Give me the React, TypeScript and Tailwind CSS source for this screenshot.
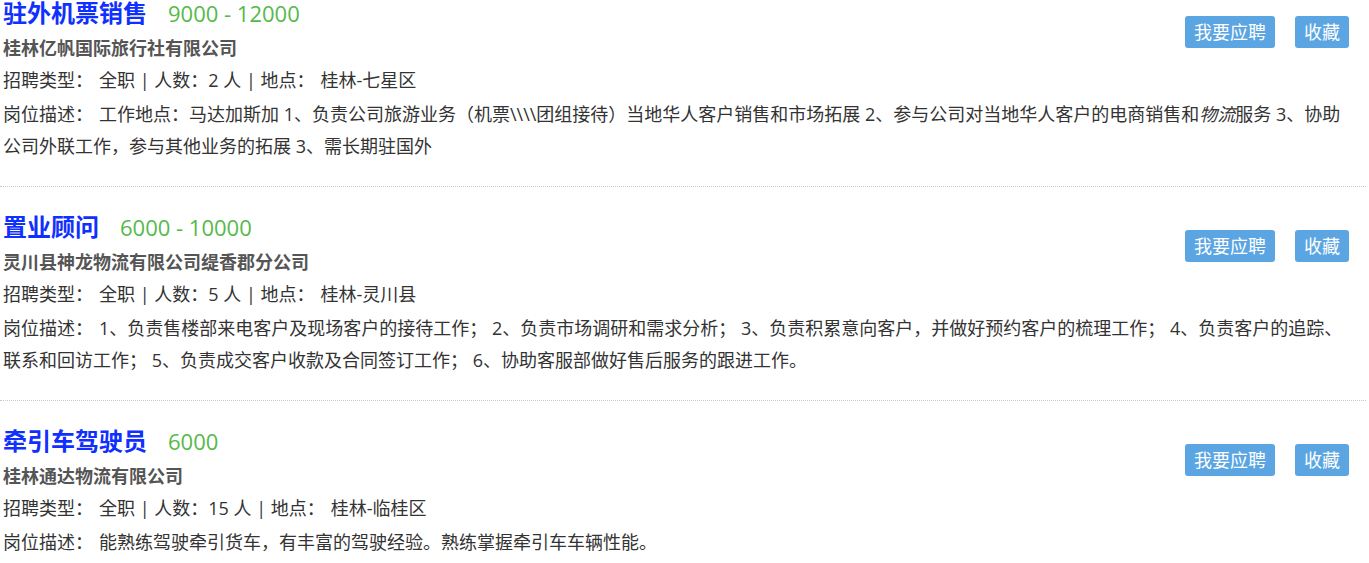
import React from 'react';

type Job = {
  id: number;
  title: string;
  salary: string;
  company: string;
  count: number;
  location: string;
  desc: React.ReactNode;
};

const jobs: Job[] = [
  {
    id: 1,
    title: '驻外机票销售',
    salary: '9000 - 12000',
    company: '桂林亿帆国际旅行社有限公司',
    count: 2,
    location: '桂林-七星区',
    desc: (
      <>
        工作地点：马达加斯加 1、负责公司旅游业务（机票\\\\团组接待）当地华人客户销售和市场拓展 2、参与公司对当地华人客户的电商销售和<em>物流</em>服务 3、协助公司外联工作，参与其他业务的拓展 3、需长期驻国外
      </>
    ),
  },
  {
    id: 2,
    title: '置业顾问',
    salary: '6000 - 10000',
    company: '灵川县神龙物流有限公司缇香郡分公司',
    count: 5,
    location: '桂林-灵川县',
    desc: '1、负责售楼部来电客户及现场客户的接待工作； 2、负责市场调研和需求分析； 3、负责积累意向客户，并做好预约客户的梳理工作； 4、负责客户的追踪、联系和回访工作； 5、负责成交客户收款及合同签订工作； 6、协助客服部做好售后服务的跟进工作。',
  },
  {
    id: 3,
    title: '牵引车驾驶员',
    salary: '6000',
    company: '桂林通达物流有限公司',
    count: 15,
    location: '桂林-临桂区',
    desc: '能熟练驾驶牵引货车，有丰富的驾驶经验。熟练掌握牵引车车辆性能。',
  },
];

const App = () => {
  return (
    <div
      className="w-[1366px] bg-white text-[18px] text-[#333]"
      style={{ fontFamily: '"Open Sans", "Noto Sans CJK SC", sans-serif' }}
    >
      {jobs.map((job, i) => (
        <div
          key={job.id}
          className={`border-b border-dotted border-[#c8c8c8] pb-6 ${i === 0 ? 'pt-0' : 'pt-[27px]'}`}
        >
          <div className="pl-[3px] pr-[14px]">
            {/* buttons */}
            <div className="float-right mt-4 mr-[3px] flex gap-5">
              <button className="h-8 rounded-[3px] bg-[#5aa5e2] px-[9px] text-[18px] leading-8 text-white">
                我要应聘
              </button>
              <button className="h-8 rounded-[3px] bg-[#5aa5e2] px-[9px] text-[18px] leading-8 text-white">
                收藏
              </button>
            </div>

            <div className="flex h-[26px] items-center">
              <span className="text-[24px] font-bold leading-[26px] text-[#0f30ff]">{job.title}</span>
              <span className="ml-[21px] text-[22px] leading-[26px] text-[#55b94a]">{job.salary}</span>
            </div>

            <div className="mt-[6px] font-bold leading-8 text-[#555]">{job.company}</div>

            <div className="mb-[2px] leading-8">
              招聘类型：<span className="ml-[6px]">全职</span> | 人数：{job.count} 人 | 地点：
              <span className="ml-[6px]">{job.location}</span>
            </div>

            <div className="leading-8">
              岗位描述：<span className="ml-[6px]">{job.desc}</span>
            </div>
          </div>
        </div>
      ))}
    </div>
  );
};

export default App;
